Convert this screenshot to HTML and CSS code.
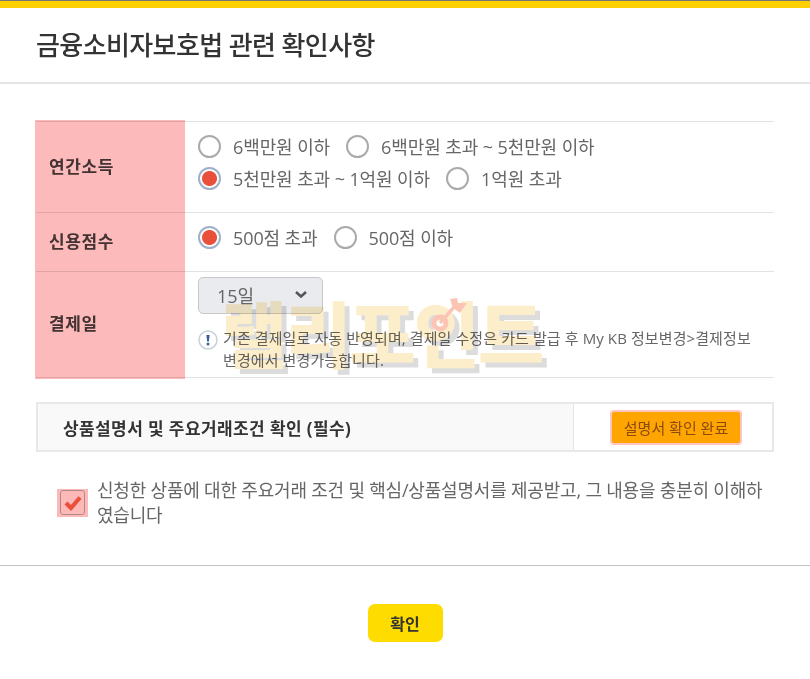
FILE: index.html
```html
<!DOCTYPE html>
<html lang="ko">
<head>
  <meta charset="UTF-8" />
  <title>금융소비자보호법 관련 확인사항</title>
  <link rel="stylesheet" href="styles.css">
</head>
<body>
  <div class="top-bar"></div>

  <div class="modal-head">
    <h2>금융소비자보호법 관련 확인사항</h2>
  </div>

  <div class="modal-body">
    <div class="info-table">
      <div class="info-row row-income">
        <div class="info-label">연간소득</div>
        <div class="info-value">
          <div class="radio-line">
            <span class="radio"></span><span class="radio-text">6백만원 이하</span>
            <span class="radio"></span><span class="radio-text">6백만원 초과 ~ 5천만원 이하</span>
          </div>
          <div class="radio-line">
            <span class="radio on"></span><span class="radio-text">5천만원 초과 ~ 1억원 이하</span>
            <span class="radio"></span><span class="radio-text">1억원 초과</span>
          </div>
        </div>
      </div>
      <div class="info-row row-score">
        <div class="info-label">신용점수</div>
        <div class="info-value">
          <div class="radio-line">
            <span class="radio on"></span><span class="radio-text">500점 초과</span>
            <span class="radio"></span><span class="radio-text">500점 이하</span>
          </div>
        </div>
      </div>
      <div class="info-row row-date">
        <div class="info-label">결제일</div>
        <div class="info-value date-value">
          <div class="select-box">
            <span>15일</span>
            <svg width="14" height="9" viewBox="0 0 14 9"><path d="M2 2l5 4.5L12 2" fill="none" stroke="#555" stroke-width="2.6"/></svg>
          </div>
          <div class="notice">
            <span class="notice-icon">
              <svg width="20" height="20" viewBox="0 0 20 20">
                <circle cx="10" cy="10" r="9" fill="#fff" stroke="#ccd0d6" stroke-width="1.5"/>
                <path d="M8.3 5h3.4l-.8 6.5H9.1z" fill="#3d6199"/>
                <circle cx="10" cy="14" r="1.5" fill="#3d6199"/>
              </svg>
            </span>
            <p>기존 결제일로 자동 반영되며, 결제일 수정은 카드 발급 후 My KB 정보변경&gt;결제정보 변경에서 변경가능합니다.</p>
          </div>
        </div>
      </div>
      <div class="label-mark"></div>
      <div class="watermark">
        <span>랠리포인트</span>
        <svg class="watermark-arrow" width="44" height="44" viewBox="0 0 44 44">
          <circle cx="15" cy="29" r="6" fill="none" stroke="#fcc4b4" stroke-width="5"/>
          <path d="M15 29 30 12" stroke="#fcc4b4" stroke-width="3.5"/>
          <path d="M25 5l7-1 1 5h9l-7 10-7-5z" fill="#fcc4b4"/>
        </svg>
      </div>
    </div>

    <div class="doc-box">
      <div class="doc-title">상품설명서 및 주요거래조건 확인 (필수)</div>
      <div class="doc-action">
        <button class="doc-btn">설명서 확인 완료</button>
      </div>
    </div>

    <div class="agree">
      <span class="check-mark">
        <span class="check-box">
          <svg width="20" height="18" viewBox="0 0 20 18"><path d="M3 9l5 5 9-10.5" fill="none" stroke="#e8503a" stroke-width="4.2"/></svg>
        </span>
      </span>
      <p>신청한 상품에 대한 주요거래 조건 및 핵심/상품설명서를 제공받고, 그 내용을 충분히 이해하였습니다</p>
    </div>
  </div>

  <div class="modal-foot">
    <button class="ok-btn">확인</button>
  </div>
</body>
</html>
```

FILE: styles.css
```css
* {
  box-sizing: border-box;
}
html, body {
  height: 100%;
}
body {
  margin: 0;
  background: #fff;
  color: #666;
  font-family: "Open Sans", "Noto Sans CJK KR", sans-serif;
  overflow: hidden;
}

.top-bar {
  height: 8px;
  background: #ffd000;
  border-top: 1px solid #777;
}

.modal-head {
  height: 76px;
  padding: 0 36px 3px;
  display: flex;
  align-items: center;
  border-bottom: 2px solid #e4e4e4;
}
.modal-head h2 {
  margin: 0;
  font-size: 26px;
  font-weight: 500;
  letter-spacing: -0.6px;
  color: #333;
}

.modal-body {
  padding: 37px 36px 0;
}

.info-table {
  position: relative;
  border-top: 1px solid #e2e2e2;
}
.info-row {
  display: flex;
  border-bottom: 1px solid #e2e2e2;
}
.row-income { height: 91px; }
.row-score { height: 59px; }
.row-date { height: 106px; }

.info-label {
  width: 149px;
  flex: none;
  display: flex;
  align-items: center;
  padding: 0 0 4px 13px;
  font-size: 17px;
  font-weight: 700;
  letter-spacing: 0.6px;
  color: #444;
}
.info-value {
  flex: 1;
  padding: 8px 0 0 13px;
  font-size: 18px;
}
.radio-line {
  display: flex;
  align-items: center;
  height: 32px;
}
.radio {
  width: 23px;
  height: 23px;
  flex: none;
  border-radius: 50%;
  border: 2px solid #aaa;
  background: #fff;
  margin-right: 12px;
}
.radio.on {
  border-color: #9fb0c8;
  background: radial-gradient(circle, #e8503a 0 7px, #fff 8px);
}
.radio-text {
  margin-right: 16px;
  letter-spacing: -0.1px;
  white-space: nowrap;
}

.date-value {
  padding-top: 5px;
}
.select-box {
  width: 125px;
  height: 37px;
  display: flex;
  align-items: center;
  justify-content: space-between;
  padding: 0 14px 2px 18px;
  background: #e9ebef;
  border: 1px solid #c8c8c8;
  border-radius: 5px;
}
.notice {
  display: flex;
  margin-top: 13px;
}
.notice-icon {
  width: 25px;
  flex: none;
  line-height: 0;
  padding-top: 3px;
}
.notice p {
  margin: 0;
  font-size: 15px;
  line-height: 22px;
  letter-spacing: 0.1px;
  word-break: keep-all;
}

/* highlight drawn over the label column */
.label-mark {
  position: absolute;
  left: -1px;
  top: -2px;
  width: 150px;
  height: 259px;
  background: #fcbaba;
  mix-blend-mode: multiply;
  pointer-events: none;
}

.watermark {
  position: absolute;
  left: 185px;
  top: 167px;
  color: #fdeecb;
  font-size: 72px;
  font-weight: 900;
  line-height: 90px;
  letter-spacing: -2px;
  white-space: nowrap;
  text-shadow: 5px 5px 0 #dcdcdc;
  mix-blend-mode: multiply;
  pointer-events: none;
}
.watermark-arrow {
  position: absolute;
  left: 204px;
  top: 5px;
}

.doc-box {
  display: flex;
  height: 50px;
  margin-top: 24px;
  border: 2px solid #e8e8e8;
}
.doc-title {
  width: 536px;
  flex: none;
  display: flex;
  align-items: center;
  padding-left: 25px;
  background: #f9f9f9;
  border-right: 1px solid #e4e4e4;
  font-size: 17px;
  font-weight: 700;
  letter-spacing: 0.4px;
  color: #333;
}
.doc-action {
  flex: 1;
  display: flex;
  align-items: center;
  justify-content: center;
  padding-left: 6px;
}
.doc-btn {
  width: 128px;
  height: 31px;
  padding: 0;
  border: none;
  border-radius: 2px;
  background: #ffa500;
  box-shadow: 0 0 0 2px #fdc4c0;
  color: #8a4a10;
  font-family: inherit;
  font-size: 15px;
}

.agree {
  display: flex;
  align-items: center;
  margin-top: 26px;
  padding-left: 21px;
}
.check-mark {
  width: 31px;
  height: 28px;
  flex: none;
  padding: 1px 3px;
  background: #fdb8b8;
  margin-right: 9px;
}
.check-box {
  display: flex;
  align-items: center;
  justify-content: center;
  width: 25px;
  height: 25px;
  border: 1px solid #b08a8a;
  border-radius: 3px;
}
.agree p {
  margin: 0;
  font-size: 18px;
  line-height: 25px;
  letter-spacing: -0.2px;
}

.modal-foot {
  display: flex;
  justify-content: center;
  margin-top: 37px;
  padding-top: 38px;
  border-top: 1px solid #c4c4c4;
}
.ok-btn {
  width: 75px;
  height: 38px;
  padding: 0;
  border: none;
  border-radius: 7px;
  background: #ffdc00;
  color: #333;
  font-family: inherit;
  font-size: 16px;
  font-weight: 700;
}
```
